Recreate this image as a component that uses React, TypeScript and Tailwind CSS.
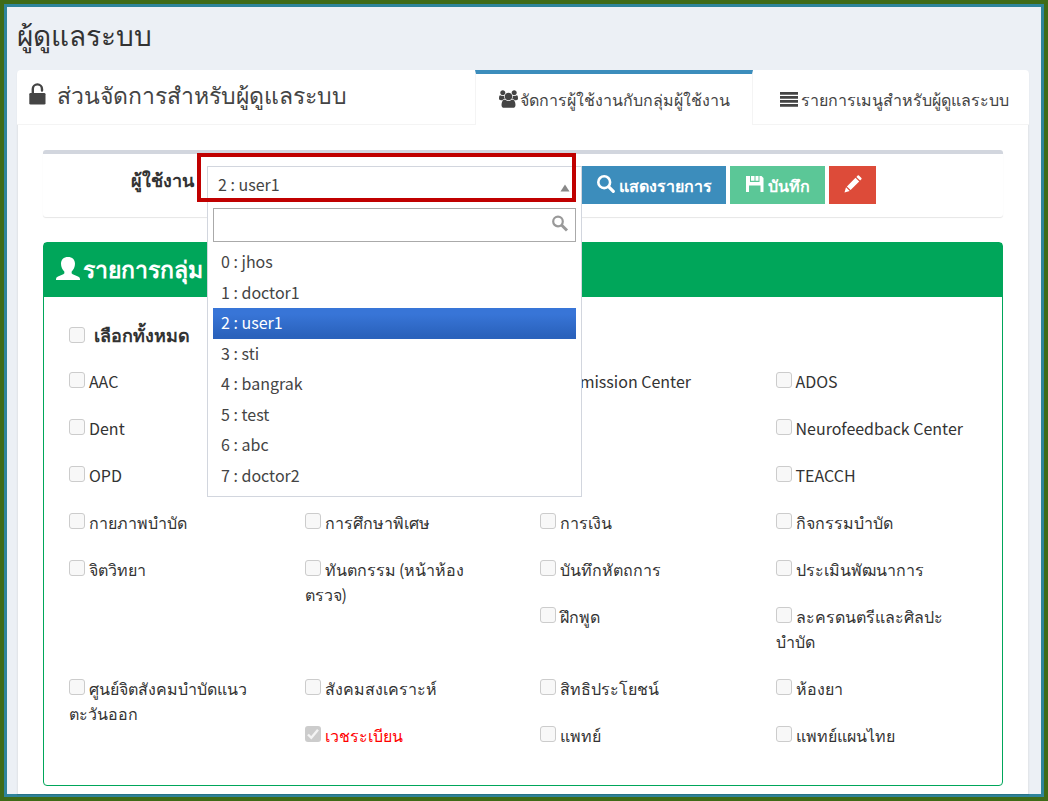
import React from "react";

type Cell = { lines: string[]; checked?: boolean; tall?: boolean } | null;

const users = ["0 : jhos", "1 : doctor1", "2 : user1", "3 : sti", "4 : bangrak", "5 : test", "6 : abc", "7 : doctor2"];
const selectedUser = "2 : user1";

const groups: Cell[] = [
  { lines: ["AAC"] },
  null,
  { lines: ["Admission Center"] },
  { lines: ["ADOS"] },
  { lines: ["Dent"] },
  null,
  null,
  { lines: ["Neurofeedback Center"] },
  { lines: ["OPD"] },
  null,
  null,
  { lines: ["TEACCH"] },
  { lines: ["กายภาพบำบัด"] },
  { lines: ["การศึกษาพิเศษ"] },
  { lines: ["การเงิน"] },
  { lines: ["กิจกรรมบำบัด"] },
  { lines: ["จิตวิทยา"] },
  { lines: ["ทันตกรรม (หน้าห้อง", "ตรวจ)"], tall: true },
  { lines: ["บันทึกหัตถการ"] },
  { lines: ["ประเมินพัฒนาการ"] },
  null,
  { lines: ["ฝึกพูด"] },
  { lines: ["ละครดนตรีและศิลปะ", "บำบัด"] },
  { lines: ["ศูนย์จิตสังคมบำบัดแนว", "ตะวันออก"], tall: true },
  { lines: ["สังคมสงเคราะห์"] },
  { lines: ["สิทธิประโยชน์"] },
  { lines: ["ห้องยา"] },
  { lines: ["เวชระเบียน"], checked: true },
  { lines: ["แพทย์"] },
  { lines: ["แพทย์แผนไทย"] },
];

function UnlockIcon() {
  return (
    <svg viewBox="0 0 17 22" className="h-[22px] w-[17px] shrink-0" aria-hidden="true">
      <path d="M3.800 11V6a4.600 4.600 0 0 1 9.200 0V7.500" fill="none" stroke="#444" strokeWidth="2.400" strokeLinecap="round" />
      <rect x="0.300" y="10" width="16.200" height="11.500" rx="1.300" fill="#444" />
    </svg>
  );
}

function UsersIcon() {
  return (
    <svg viewBox="0 0 1920 1792" className="h-[18px] w-[19px] shrink-0 fill-[#444]" aria-hidden="true">
      <path d="M593 896q-162 5-265 128h-134q-82 0-137-40.500t-57-118.500q0-353 124-353 6 0 43.500 21t97.500 42.500 119 21.500q67 0 133-23-5 37-5 66 0 139 81 256zM1664 1533q0 120-73 189.500t-194 69.500h-874q-121 0-194-69.500t-73-189.500q0-53 3.500-103.500t14-109 26.500-108.500 43-97.500 62-81 85.500-53.500 111.500-20q10 0 43 21.500t73 48 107 48 135 21.500 135-21.500 107-48 73-48 43-21.500q61 0 111.500 20t85.500 53.500 62 81 43 97.500 26.500 108.500 14 109 3.500 103.500zM640 256q0 106-75 181t-181 75-181-75-75-181 75-181 181-75 181 75 75 181zM1344 640q0 159-112.500 271.500t-271.500 112.500-271.500-112.500-112.500-271.500 112.500-271.500 271.500-112.500 271.500 112.500 112.500 271.500zM1920 865q0 78-57 118.500t-137 40.500h-134q-103-123-265-128 81-117 81-256 0-29-5-66 66 23 133 23 59 0 119-21.500t97.500-42.500 43.500-21q124 0 124 353zM1792 256q0 106-75 181t-181 75-181-75-75-181 75-181 181-75 181 75 75 181z" />
    </svg>
  );
}

function LinesIcon() {
  return (
    <svg viewBox="0 0 18 15" className="h-[15px] w-[18px] shrink-0 fill-[#444]" aria-hidden="true">
      <path d="M0 0h18v2.700H0zM0 4h18v2.700H0zM0 8h18v2.700H0zM0 12h18v2.700H0z" />
    </svg>
  );
}

function SearchIcon() {
  return (
    <svg viewBox="0 0 18 18" className="-mt-0.5 size-[18px] shrink-0" fill="none" stroke="#fff" aria-hidden="true">
      <circle cx="7.200" cy="7.200" r="5.900" strokeWidth="2.600" />
      <path d="M11.800 11.800L16.300 16.300" strokeWidth="3.200" strokeLinecap="round" />
    </svg>
  );
}

function SaveIcon() {
  return (
    <svg viewBox="0 0 18 16" className="-mt-0.5 h-4 w-[18px] shrink-0 fill-white" aria-hidden="true">
      <path fillRule="evenodd" d="M0 0H4V6H13.500V0H15.500L17.500 2V16H14.500V9.500H3V16H0zM9.500 0H12.500V4.800H9.500zM5 0H8.500V4.800H5z" />
    </svg>
  );
}

function PencilIcon() {
  return (
    <svg viewBox="0 0 18 18" className="-mt-0.5 size-[18px] shrink-0 fill-white" aria-hidden="true">
      <path d="M0.500 17.500L2 12.300L5.700 16zM2.900 11.400L11.500 2.800L15.200 6.500L6.600 15.100zM12.400 1.900L13.700 0.600Q14.300 0.100 14.900 0.600L17.400 3.100Q17.900 3.700 17.400 4.300L16.100 5.600z" />
    </svg>
  );
}

function PersonIcon() {
  return (
    <svg viewBox="0 0 24 23" className="h-[23px] w-6 shrink-0 fill-white" aria-hidden="true">
      <path d="M12 0C7.700 0 5 2.700 5 6.700C5 10 6.500 12.800 8.300 14.600Q9 16.600 7.300 17.300L2 19.500Q0 20.300 0 22V23H24V22Q24 20.300 22 19.500L16.700 17.300Q15 16.600 15.700 14.600C17.500 12.800 19 10 19 6.700C19 2.700 16.300 0 12 0z" />
    </svg>
  );
}

const boxStyle =
  "size-4 shrink-0 appearance-none rounded-[3px] border border-[#ccc] bg-[#f8f8f8]";

function CheckBox({ id, checked }: { id: string; checked?: boolean }) {
  if (checked) {
    return (
      <span className="mr-1 inline-grid size-4 align-baseline">
        <input id={id} type="checkbox" defaultChecked disabled className="col-start-1 row-start-1 size-4 appearance-none rounded-[3px] bg-[#ccc]" />
        <svg viewBox="0 0 16 16" className="pointer-events-none col-start-1 row-start-1 size-4" fill="none" stroke="#f4f4f4" strokeWidth="2.400" aria-hidden="true">
          <path d="M3 8.500L6.300 11.800L13 3.800" />
        </svg>
      </span>
    );
  }
  return <input id={id} type="checkbox" disabled className={`${boxStyle} mr-1 inline-block align-baseline`} />;
}

function GroupCell({ cell, id }: { cell: Cell; id: string }) {
  if (!cell) return <div />;
  return (
    <div className={`px-[15px] pb-[22px] leading-[25px] ${cell.tall ? "row-span-2" : ""} ${cell.checked ? "text-[#f00]" : "text-[#333]"}`}>
      <CheckBox id={id} checked={cell.checked} />
      <label htmlFor={id}>
        {cell.lines.map((line, i) => (
          <React.Fragment key={line}>
            {i > 0 && <br />}
            {line}
          </React.Fragment>
        ))}
      </label>
    </div>
  );
}

function UserPicker() {
  return (
    <div className="relative w-[375px] shrink-0">
      <button type="button" id="user" aria-haspopup="listbox" aria-expanded="true" className="flex h-[38px] w-full items-center justify-between border border-b-0 border-[#d2d6de] bg-white pr-[11px] pb-[3px] pl-2.5 text-base text-[#444]">
        {selectedUser}
        <svg viewBox="0 0 10 8" className="mt-2 h-2 w-2.5 fill-[#888]" aria-hidden="true">
          <path d="M5 0.500L9.500 7.500H0.500z" />
        </svg>
      </button>
      <div className="absolute top-[38px] left-0 z-10 w-full border border-t-0 border-[#d2d6de] bg-white px-[5px] pt-1 pb-[5px]">
        <div className="flex h-[34px] items-start border border-[#aaa]">
          <input type="text" aria-label="ค้นหาผู้ใช้งาน" className="h-full min-w-0 flex-1 px-2 text-base outline-none" />
          <svg viewBox="0 0 18 18" className="mt-1.5 mr-1.5 size-[18px]" fill="none" stroke="#999" aria-hidden="true">
            <circle cx="7" cy="6.500" r="4.800" strokeWidth="2.200" />
            <path d="M10.500 10L16 15.500" strokeWidth="3" />
          </svg>
        </div>
        <ul role="listbox" className="pt-[5px]">
          {users.map((user) => (
            <li
              key={user}
              role="option"
              aria-selected={user === selectedUser}
              className="flex items-center px-2 pb-[3px] text-base text-[#444] odd:h-[31px] even:h-[30px] aria-selected:bg-linear-to-b aria-selected:from-[#3875d7] aria-selected:from-20% aria-selected:to-[#2a62bc] aria-selected:to-90% aria-selected:text-white"
            >
              {user}
            </li>
          ))}
        </ul>
      </div>
      <div className="pointer-events-none absolute -top-[13px] -left-2.5 z-20 h-[49px] w-[379px] border-4 border-[#c00000]" />
    </div>
  );
}

export default function App() {
  return (
    <div className="flex min-h-screen flex-col border-4 border-[#3f6b17] bg-[#ecf0f5] font-['Noto_Sans_CJK_SC',sans-serif] text-base text-[#333]">
      <div className="flex flex-1 flex-col border-[3px] border-[#2e849b] pr-3 pl-2.5">
        <h1 className="flex h-[63px] items-center pb-2.5 text-[28px]">ผู้ดูแลระบบ</h1>

        <main className="flex flex-1 flex-col rounded-t bg-white shadow-[0_1px_1px_rgba(0,0,0,0.15)]">
          <header className="flex h-[55px] border-b border-[#f4f4f4] text-[#444]">
            <h2 className="flex flex-1 items-center gap-[11px] pb-1.5 pl-3 text-[23px]">
              <UnlockIcon />
              ส่วนจัดการสำหรับผู้ดูแลระบบ
            </h2>
            <nav className="flex">
              <a href="#users" className="-mb-px flex w-[278px] items-center justify-center gap-0.5 border-x border-t-4 border-x-[#f4f4f4] border-t-[#3c8dbc] bg-white pb-0.5">
                <UsersIcon />
                จัดการผู้ใช้งานกับกลุ่มผู้ใช้งาน
              </a>
              <a href="#menus" className="flex w-[276px] items-center justify-end gap-[3px] pt-1 pr-5">
                <LinesIcon />
                รายการเมนูสำหรับผู้ดูแลระบบ
              </a>
            </nav>
          </header>

          <div className="flex flex-1 flex-col border-x border-[#e3e6ea] px-[25px] pt-[25px] pb-2">
            <section className="flex h-[67px] rounded-[3px] border-t-4 border-[#d2d6de] pt-3 shadow-[0_1px_1px_rgba(0,0,0,0.1)]">
              <label htmlFor="user" className="w-[164px] shrink-0 pr-[13px] text-right text-lg leading-[26px] font-bold">
                ผู้ใช้งาน
              </label>
              <UserPicker />
              <div className="flex h-[38px] gap-1 font-bold text-white">
                <button type="button" className="flex w-36 items-center justify-center gap-1 bg-[#3c8dbc]">
                  <SearchIcon />
                  แสดงรายการ
                </button>
                <button type="button" className="flex w-[95px] items-center justify-center gap-1 bg-[#5bc797]">
                  <SaveIcon />
                  บันทึก
                </button>
                <button type="button" aria-label="แก้ไข" className="flex w-[47px] items-center justify-center bg-[#dd4b39]">
                  <PencilIcon />
                </button>
              </div>
            </section>

            <section className="mt-[25px] flex-1 rounded border border-[#00a65a]">
              <h3 className="flex h-[54px] items-center gap-[3px] bg-[#00a65a] pb-1 pl-3 text-[23px] font-bold text-white">
                <PersonIcon />
                รายการกลุ่ม
              </h3>
              <div className="pt-[25px] pr-1.5 pl-2.5">
                <div className="flex h-[26px] items-center gap-[9px] px-[15px] text-lg leading-[26px] font-bold">
                  <input id="all" type="checkbox" disabled className={boxStyle} />
                  <label htmlFor="all" className="pb-[3px]">เลือกทั้งหมด</label>
                </div>
                <div className="mt-[21px] grid grid-cols-4">
                  {groups.map((cell, i) => (
                    <GroupCell key={i} cell={cell} id={`group-${i}`} />
                  ))}
                </div>
              </div>
            </section>
          </div>
        </main>
      </div>
    </div>
  );
}
